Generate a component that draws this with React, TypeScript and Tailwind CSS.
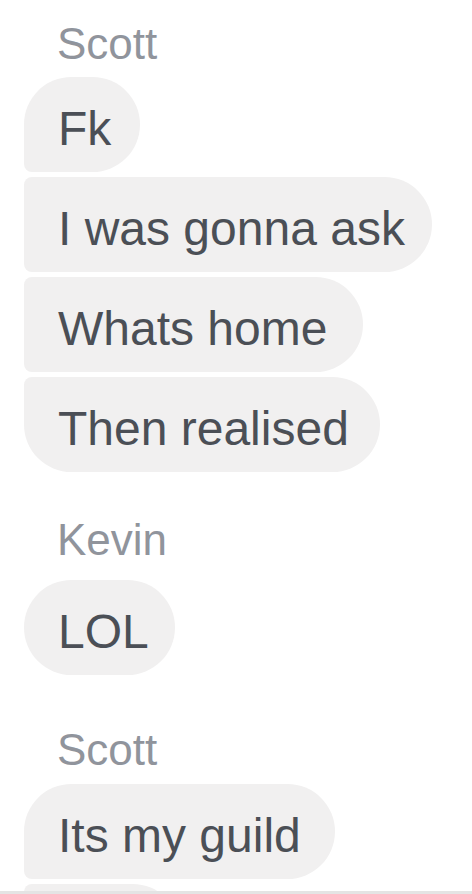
import React from "react";

const font = { fontFamily: '"Liberation Sans", Arial, sans-serif' };

function Label({ text, mt }: { text: string; mt: string }) {
  return (
    <div className={`${mt} pl-[57px] h-[44px] text-[44px] leading-[44px] text-[#90949c]`}>{text}</div>
  );
}

function Bubble({ text, w, mt, shape }: { text: string; w: string; mt: string; shape: string }) {
  return (
    <div
      className={`${mt} ${w} ${shape} h-[95px] shrink-0 bg-[#f1f0f0] pl-[34px] pt-[28px] text-[48px] leading-[48px] text-[#4b4f56] whitespace-nowrap`}
    >
      {text}
    </div>
  );
}

export default function App() {
  return (
    <div className="w-[472px] h-[894px] bg-white flex flex-col overflow-hidden" style={font}>
      <div className="h-[891px] overflow-hidden flex flex-col items-start pl-[24px]">
        <div className="self-stretch -ml-[24px]">
          <Label text="Scott" mt="mt-[22px]" />
        </div>
        <Bubble text="Fk" w="w-[116px]" mt="mt-[11px]" shape="rounded-tl-[48px] rounded-r-[48px] rounded-bl-[8px]" />
        <Bubble text="I was gonna ask" w="w-[408px]" mt="mt-[5px]" shape="rounded-l-[8px] rounded-r-[48px]" />
        <Bubble text="Whats home" w="w-[339px]" mt="mt-[5px]" shape="rounded-l-[8px] rounded-r-[48px]" />
        <Bubble text="Then realised" w="w-[356px]" mt="mt-[5px]" shape="rounded-tl-[8px] rounded-r-[48px] rounded-bl-[48px]" />
        <div className="self-stretch -ml-[24px]">
          <Label text="Kevin" mt="mt-[46px]" />
        </div>
        <Bubble text="LOL" w="w-[151px]" mt="mt-[18px]" shape="rounded-[48px]" />
        <div className="self-stretch -ml-[24px]">
          <Label text="Scott" mt="mt-[53px]" />
        </div>
        <Bubble text="Its my guild" w="w-[311px]" mt="mt-[12px]" shape="rounded-tl-[48px] rounded-r-[48px] rounded-bl-[8px]" />
        <Bubble text="" w="w-[156px]" mt="mt-[5px]" shape="rounded-l-[8px] rounded-r-[48px]" />
      </div>
      <div className="h-[3px] bg-[#e4e4e4]" />
    </div>
  );
}
